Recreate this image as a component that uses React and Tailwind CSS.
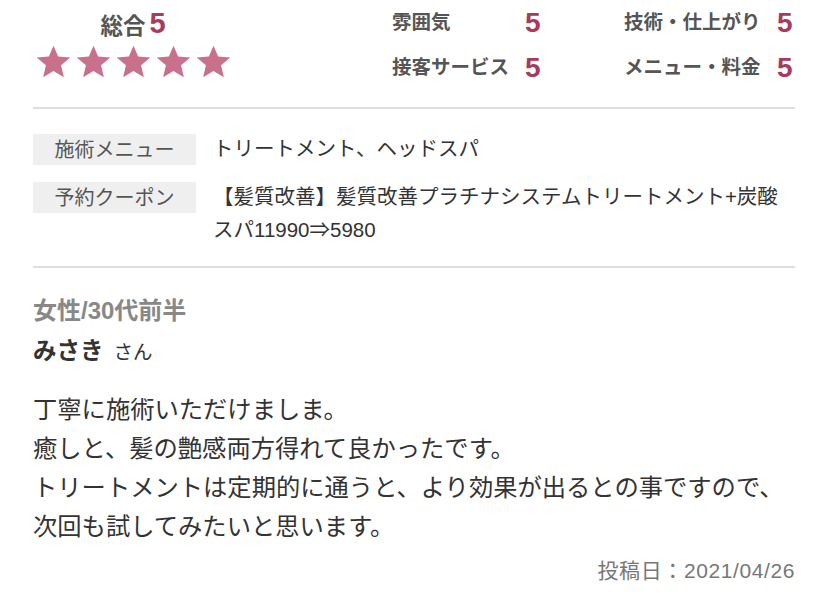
import React from 'react';

const FONT = { fontFamily: '"Liberation Sans", "Noto Sans CJK JP", sans-serif' };

function Star() {
    return (
        <svg width="35" height="34" viewBox="0 0 24 23">
            <path d="M12 0.3l3.2 7.4 8.3 0.7-6.3 5.4 1.9 8.1L12 17.6l-7.1 4.3 1.9-8.1-6.3-5.4 8.3-0.7z" fill="#c9718c" />
        </svg>
    );
}

function Score({ label, width }) {
    return (
        <div className="flex items-center h-[45px]">
            <span className={`text-[19.5px] font-bold text-[#555] ${width}`}>{label}</span>
            <span className="text-[28px] font-bold text-[#a83a5c] leading-none">5</span>
        </div>
    );
}

export default function App() {
    const body = [
        '丁寧に施術いただけましま。',
        '癒しと、髪の艶感両方得れて良かったです。',
        'トリートメントは定期的に通うと、より効果が出るとの事ですので、',
        '次回も試してみたいと思います。',
    ];

    return (
        <div className="w-[828px] h-[612px] bg-white px-[33px] overflow-hidden" style={FONT}>
            {/* 評価 */}
            <div className="flex h-[107px]">
                <div className="w-[200px] flex flex-col items-center pt-[10px]">
                    <div className="flex items-end h-[35px] pb-[7px]">
                        <span className="text-[22.5px] font-bold text-[#555] leading-none">総合</span>
                        <span className="text-[29px] font-bold text-[#a83a5c] ml-[4px] leading-none">5</span>
                    </div>
                    <div className="flex gap-[5px]">
                        <Star />
                        <Star />
                        <Star />
                        <Star />
                        <Star />
                    </div>
                </div>
                <div className="ml-[159px] grid grid-cols-[232px_auto] content-start">
                    <Score label="雰囲気" width="w-[133px]" />
                    <Score label="技術・仕上がり" width="w-[153px]" />
                    <Score label="接客サービス" width="w-[133px]" />
                    <Score label="メニュー・料金" width="w-[153px]" />
                </div>
            </div>
            <div className="h-[2px] bg-[#dedede]" />

            {/* メニュー */}
            <div className="pt-[25px] pb-[20px] flex flex-col gap-[17px]">
                <div className="flex">
                    <div className="w-[163px] h-[31px] bg-[#efefef] flex items-center justify-center text-[20px] text-[#555] shrink-0">
                        施術メニュー
                    </div>
                    <div className="ml-[17px] text-[20.5px] leading-[33px] text-[#333] -mt-[2px]">トリートメント、ヘッドスパ</div>
                </div>
                <div className="flex">
                    <div className="w-[163px] h-[31px] bg-[#efefef] flex items-center justify-center text-[20px] text-[#555] shrink-0">
                        予約クーポン
                    </div>
                    <div className="ml-[17px] text-[20.5px] leading-[33px] text-[#333] -mt-[2px]">
                        【髪質改善】髪質改善プラチナシステムトリートメント+炭酸スパ11990⇒5980
                    </div>
                </div>
            </div>
            <div className="h-[2px] bg-[#dedede]" />

            {/* 口コミ */}
            <div className="pt-[26px]">
                <div className="text-[24px] font-bold text-[#888] leading-[34px]">女性/30代前半</div>
                <div className="flex items-baseline mt-[7px] leading-[32px]">
                    <span className="text-[23.5px] font-bold text-[#333]">みさき</span>
                    <span className="text-[19.5px] text-[#333] ml-[10px]">さん</span>
                </div>
                <div className="mt-[22px] text-[24.3px] leading-[39px] text-[#333]">
                    {body.map((line) => (
                        <div key={line}>{line}</div>
                    ))}
                </div>
                <div className="text-right text-[21px] text-[#777] mt-[10px] leading-[30px] tracking-[0.6px]">投稿日：2021/04/26</div>
            </div>
        </div>
    );
}
